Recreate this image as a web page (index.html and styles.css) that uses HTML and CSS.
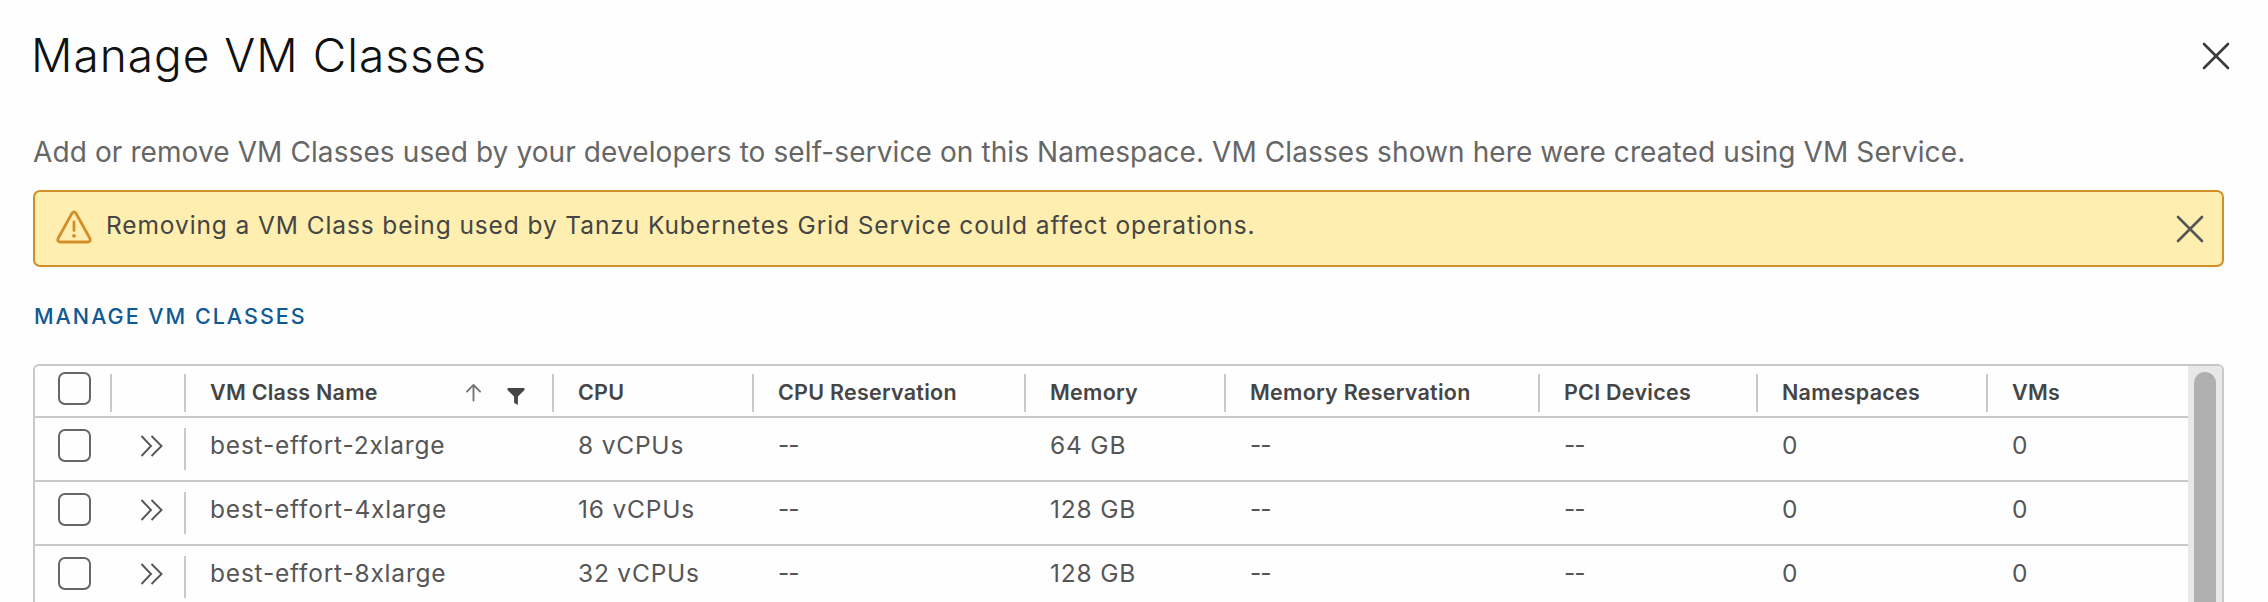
FILE: index.html
```
<!DOCTYPE html>
<html lang="en">
<head>
<meta charset="utf-8">
<title>Manage VM Classes</title>
<link rel="stylesheet" href="styles.css">
</head>
<body>
<main class="dialog">
  <header class="dialog-header">
    <h1 class="dialog-title">Manage VM Classes</h1>
    <svg class="dialog-close" viewBox="0 0 28 28" fill="none" stroke="#3c3c3c" stroke-width="2.6" stroke-linecap="round"><path d="M2 2L26 26M26 2L2 26"/></svg>
  </header>
  <p class="description">Add or remove VM Classes used by your developers to self-service on this Namespace. VM Classes shown here were created using VM Service.</p>
  <div class="alert">
    <svg class="alert-icon" viewBox="0 0 36 34" fill="none" stroke="#d28f28" stroke-width="2.8" stroke-linejoin="round" stroke-linecap="round"><path d="M16 3.2L2.2 28.2Q.8 31.8 4.2 32H31.8Q35.2 31.8 33.8 28.2L20 3.2Q18 .4 16 3.2Z"/><path d="M18 12V20.5"/><circle cx="18" cy="25.8" r="1.9" fill="#d28f28" stroke="none"/></svg>
    <span class="alert-text">Removing a VM Class being used by Tanzu Kubernetes Grid Service could affect operations.</span>
    <svg class="alert-close" viewBox="0 0 28 28" fill="none" stroke="#565656" stroke-width="2.6" stroke-linecap="round"><path d="M2 2L26 26M26 2L2 26"/></svg>
  </div>
  <a class="action">MANAGE VM CLASSES</a>
  <section class="datagrid">
    <div class="grid-body">
      <div class="row head">
        <div class="cell select"><span class="checkbox"></span></div>
        <div class="cell"></div>
        <div class="cell name">VM Class Name
          <span class="tools">
            <svg class="sort" viewBox="0 0 18 20" fill="none" stroke="#737373" stroke-width="2" stroke-linecap="round" stroke-linejoin="round"><path d="M9 18.5V2M2 9L9 2L16 9"/></svg>
            <svg class="filter" viewBox="0 0 18 18" fill="#454545"><path d="M0 0H18V2L11 9V18L7 15.5V9L0 2Z"/></svg>
          </span>
        </div>
        <div class="cell">CPU</div>
        <div class="cell">CPU Reservation</div>
        <div class="cell">Memory</div>
        <div class="cell">Memory Reservation</div>
        <div class="cell">PCI Devices</div>
        <div class="cell">Namespaces</div>
        <div class="cell">VMs</div>
      </div>
      <div class="row">
        <div class="cell select"><span class="checkbox"></span></div>
        <div class="cell expand"><svg class="chevrons" viewBox="0 0 23 22"><path d="M1.5 1L11 11L1.5 21M11.5 1L21.5 11L11.5 21"/></svg></div>
        <div class="cell">best-effort-2xlarge</div>
        <div class="cell">8 vCPUs</div>
        <div class="cell dash">--</div>
        <div class="cell">64 GB</div>
        <div class="cell dash">--</div>
        <div class="cell dash">--</div>
        <div class="cell">0</div>
        <div class="cell">0</div>
      </div>
      <div class="row">
        <div class="cell select"><span class="checkbox"></span></div>
        <div class="cell expand"><svg class="chevrons" viewBox="0 0 23 22"><path d="M1.5 1L11 11L1.5 21M11.5 1L21.5 11L11.5 21"/></svg></div>
        <div class="cell">best-effort-4xlarge</div>
        <div class="cell">16 vCPUs</div>
        <div class="cell dash">--</div>
        <div class="cell">128 GB</div>
        <div class="cell dash">--</div>
        <div class="cell dash">--</div>
        <div class="cell">0</div>
        <div class="cell">0</div>
      </div>
      <div class="row">
        <div class="cell select"><span class="checkbox"></span></div>
        <div class="cell expand"><svg class="chevrons" viewBox="0 0 23 22"><path d="M1.5 1L11 11L1.5 21M11.5 1L21.5 11L11.5 21"/></svg></div>
        <div class="cell">best-effort-8xlarge</div>
        <div class="cell">32 vCPUs</div>
        <div class="cell dash">--</div>
        <div class="cell">128 GB</div>
        <div class="cell dash">--</div>
        <div class="cell dash">--</div>
        <div class="cell">0</div>
        <div class="cell">0</div>
      </div>
    </div>
    <div class="scroll-track"><div class="scroll-thumb"></div></div>
  </section>
</main>
</body>
</html>
```
FILE: styles.css
```
* { box-sizing: border-box; }

body {
  margin: 0;
  height: 602px;
  overflow: hidden;
  background: #fefefe;
  color: #565656;
  font-family: Inter, "Liberation Sans", sans-serif;
}

svg { display: block; flex: none; }

.dialog {
  display: flex;
  flex-direction: column;
  height: 602px;
  padding: 28px 44px 0 33px;
  overflow: hidden;
}

.dialog > * { flex: none; }

.dialog-header {
  display: flex;
  justify-content: space-between;
  height: 96px;
  margin-right: -6px;
}

.dialog-title {
  margin: -1px 0 0 -2px;
  color: #111;
  font-size: 46px;
  font-weight: 300;
  line-height: 56px;
  letter-spacing: 1px;
}

.dialog-close { width: 28px; height: 28px; margin-top: 14px; }

.description {
  height: 66px;
  margin: 0;
  padding-top: 10px;
  color: #666;
  font-size: 28px;
  line-height: 36px;
  letter-spacing: 0.1px;
  white-space: nowrap;
}

.alert {
  display: flex;
  align-items: flex-start;
  height: 77px;
  padding: 18px 18px 0 21px;
  border: 2px solid #d28f28;
  border-radius: 7px;
  background: #feeeb0;
}

.alert-icon { width: 36px; height: 34px; }

.alert-text {
  flex: 1;
  margin-left: 14px;
  color: #454545;
  font-size: 24.5px;
  line-height: 30px;
  letter-spacing: 0.9px;
}

.alert-close { width: 28px; height: 28px; margin-top: 5px; }

.action {
  height: 97px;
  padding: 35px 0 0 1px;
  color: #0f5a94;
  font-size: 21.5px;
  font-weight: 500;
  line-height: 28px;
  letter-spacing: 2px;
}

.datagrid {
  display: flex;
  height: 260px;
  border: 2px solid #c9c9c9;
  border-radius: 6px 6px 0 0;
  overflow: hidden;
}

.grid-body { flex: 1; }

.row {
  display: grid;
  grid-template-columns: 77px 74px 368px 200px 272px 200px 314px 218px 230px 1fr;
  height: 64px;
  padding: 10px 0;
  border-bottom: 2px solid #c9c9c9;
  font-size: 24.5px;
  letter-spacing: 0.8px;
}

.row.head {
  height: 52px;
  padding: 8px 0 4px;
  color: #454545;
  font-size: 21.5px;
  font-weight: 600;
  letter-spacing: 0.25px;
}

.cell {
  padding-left: 24px;
  line-height: 34px;
  white-space: nowrap;
}

.select { padding-left: 23px; }

.head .cell {
  height: 38px;
  line-height: 36px;
  border-right: 2px solid #c9c9c9;
}

.head .cell:last-child { border-right: 0; }

.dash { letter-spacing: -1px; }

.name { display: flex; justify-content: space-between; }

.tools { display: flex; gap: 25px; padding-right: 27px; }

.sort { width: 17px; height: 19px; margin-top: 9px; }

.filter { width: 18px; height: 17px; margin-top: 14px; }

.checkbox {
  display: block;
  width: 33px;
  height: 33px;
  margin-top: 1px;
  border: 2px solid #666;
  border-radius: 7px;
}

.head .checkbox { margin-top: -2px; }

.expand {
  height: 42px;
  padding: 7px 0 0 28px;
  border-right: 2px solid #c9c9c9;
}

.chevrons {
  width: 23px;
  height: 22px;
  fill: none;
  stroke: #565656;
  stroke-width: 1.9;
}

.scroll-track {
  width: 34px;
  padding: 6px 6px 0;
  background: #e8e8e8;
}

.scroll-thumb {
  height: 270px;
  border-radius: 11px 11px 0 0;
  background: #b0b0b0;
}
```
